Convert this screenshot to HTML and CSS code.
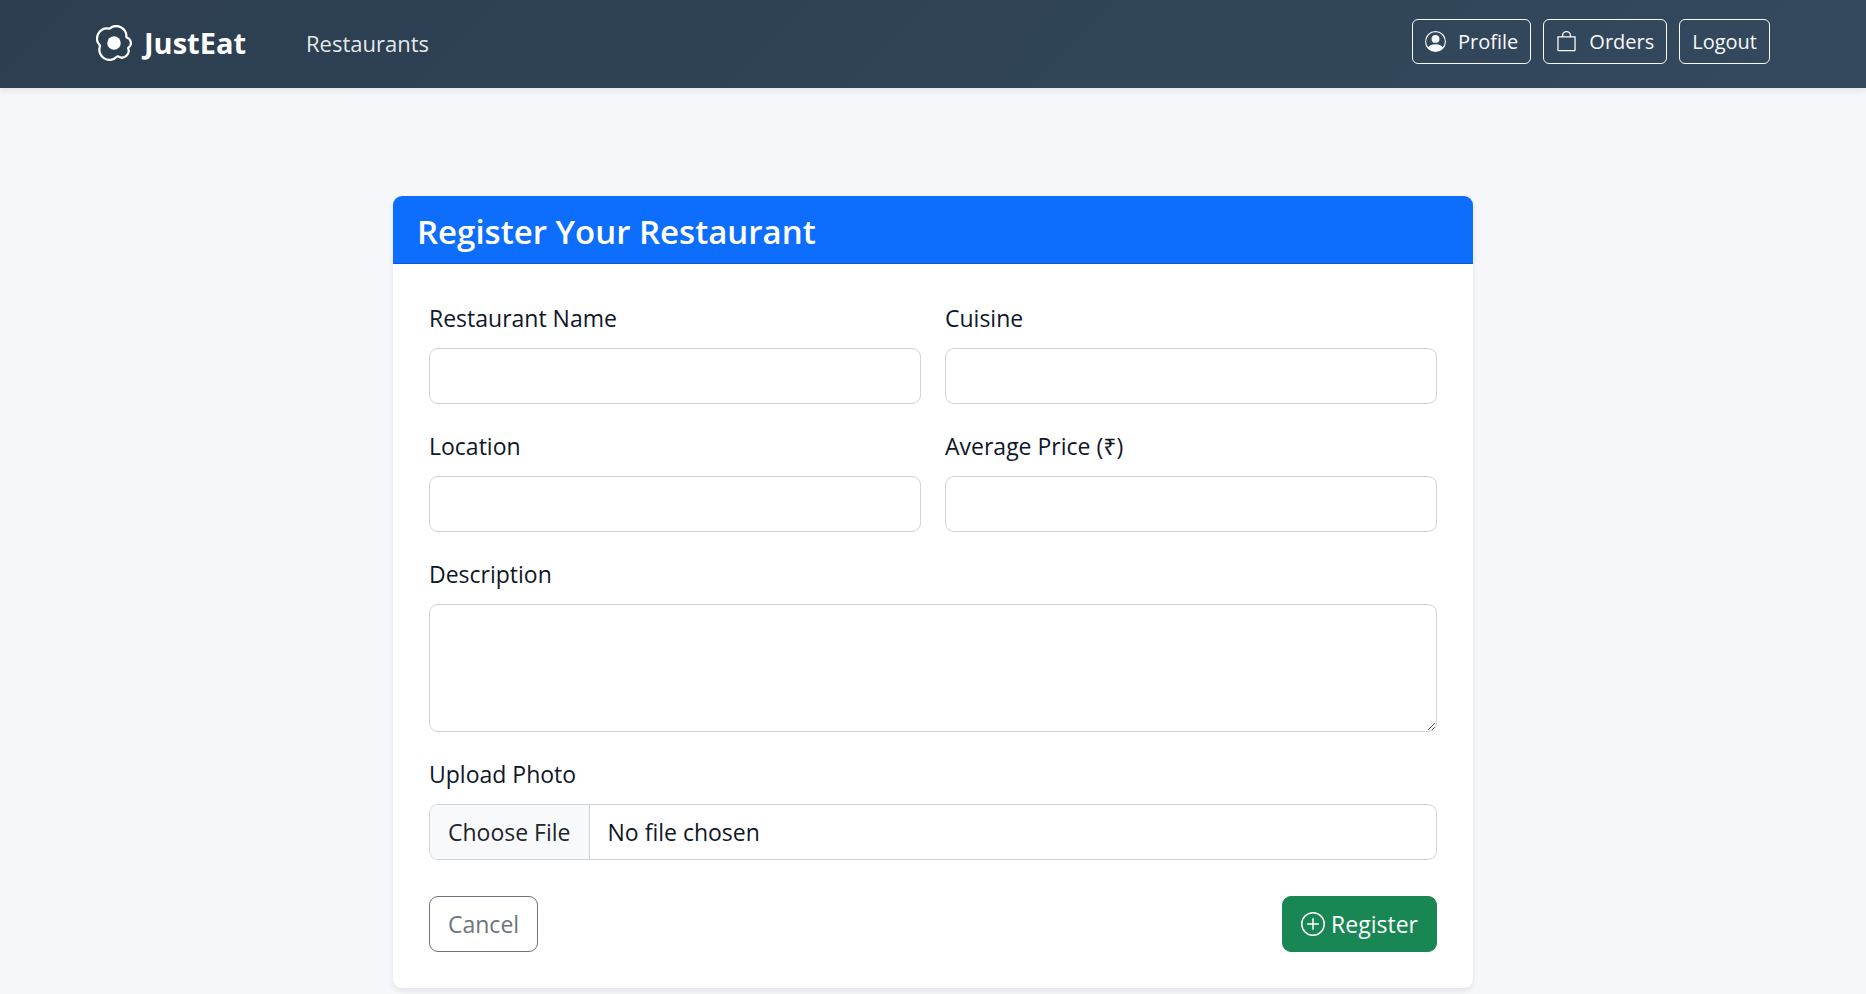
FILE: index.html
```html
<!DOCTYPE html>
<html lang="en">
<head>
<meta charset="utf-8">
<meta name="viewport" content="width=device-width, initial-scale=1">
<title>JustEat - Register Your Restaurant</title>
<link rel="stylesheet" href="styles.css">
</head>
<body>
<header class="navbar">
  <div class="navbar-inner">
    <a class="brand" href="#">
      <svg class="brand-icon" viewBox="0 0 16 16" fill="currentColor" aria-hidden="true"><path d="M8 11a3 3 0 1 0 0-6 3 3 0 0 0 0 6z"/><path d="M13.997 5.17a5 5 0 0 0-8.101-4.09A5 5 0 0 0 1.28 9.342a5 5 0 0 0 8.336 5.109 3.5 3.5 0 0 0 5.201-4.065 3.001 3.001 0 0 0-.822-5.216zm-1-.034a1 1 0 0 0 .668.977 2.001 2.001 0 0 1 .547 3.478 1 1 0 0 0-.341 1.113 2.5 2.5 0 0 1-3.715 2.905 1 1 0 0 0-1.262.152 4 4 0 0 1-6.67-4.087 1 1 0 0 0-.2-1 4 4 0 0 1 3.693-6.61 1 1 0 0 0 .8-.2 4 4 0 0 1 6.48 3.273z"/></svg>
      <span>JustEat</span>
    </a>
    <nav class="nav-links"><a class="nav-link" href="#">Restaurants</a></nav>
    <div class="nav-actions">
      <a class="btn-nav" href="#"><svg class="nav-icon" viewBox="0 0 16 16" fill="currentColor" aria-hidden="true"><path d="M11 6a3 3 0 1 1-6 0 3 3 0 0 1 6 0z"/><path fill-rule="evenodd" d="M0 8a8 8 0 1 1 16 0A8 8 0 0 1 0 8zm8-7a7 7 0 0 0-5.468 11.37C3.242 11.226 4.805 10 8 10s4.757 1.225 5.468 2.37A7 7 0 0 0 8 1z"/></svg><span>Profile</span></a>
      <a class="btn-nav" href="#"><svg class="nav-icon" viewBox="0 0 16 16" fill="currentColor" aria-hidden="true"><path d="M8 1a2.5 2.5 0 0 1 2.5 2.5V4h-5v-.5A2.5 2.5 0 0 1 8 1zm3.5 3v-.5a3.5 3.5 0 1 0-7 0V4H1v10.500a1 1 0 0 0 1 1h12a1 1 0 0 0 1-1V4h-3.5zM2 5h12v9.500H2V5z"/></svg><span>Orders</span></a>
      <button class="btn-nav" type="button">Logout</button>
    </div>
  </div>
</header>
<main class="page">
  <section class="card">
    <h1 class="card-header">Register Your Restaurant</h1>
    <form class="card-body">
      <div class="field">
        <label for="name">Restaurant Name</label>
        <input class="control" id="name" type="text">
      </div>
      <div class="field">
        <label for="cuisine">Cuisine</label>
        <input class="control" id="cuisine" type="text">
      </div>
      <div class="field">
        <label for="location">Location</label>
        <input class="control" id="location" type="text">
      </div>
      <div class="field">
        <label for="price">Average Price (₹)</label>
        <input class="control" id="price" type="text" inputmode="numeric">
      </div>
      <div class="field field-wide">
        <label for="description">Description</label>
        <textarea class="control control-area" id="description" rows="3"></textarea>
      </div>
      <div class="field field-wide">
        <label for="photo">Upload Photo</label>
        <input class="control control-file" id="photo" type="file">
      </div>
      <div class="actions">
        <button class="btn btn-cancel" type="button">Cancel</button>
        <button class="btn btn-register" type="submit"><svg class="btn-icon" viewBox="0 0 16 16" fill="currentColor" aria-hidden="true"><path d="M8 15A7 7 0 1 1 8 1a7 7 0 0 1 0 14zm0 1A8 8 0 1 0 8 0a8 8 0 0 0 0 16z"/><path d="M8 4a.5.5 0 0 1 .5.5v3h3a.5.5 0 0 1 0 1h-3v3a.5.5 0 0 1-1 0v-3h-3a.5.5 0 0 1 0-1h3v-3A.5.5 0 0 1 8 4z"/></svg><span>Register</span></button>
      </div>
    </form>
  </section>
</main>
</body>
</html>
```

FILE: styles.css
```css
* {
  box-sizing: border-box;
}

body {
  margin: 0;
  background: #f5f7fb;
  color: #0f172a;
  font-family: "Open Sans", "Noto Sans", sans-serif;
  font-size: 23px;
  line-height: 36px;
}

a {
  color: inherit;
  text-decoration: none;
}

button,
input,
textarea {
  font: inherit;
}

svg {
  display: block;
  flex: none;
}

.navbar {
  background: linear-gradient(135deg, #2c3e50, #34495e);
  box-shadow: 0 3px 6px rgba(0, 0, 0, 0.075);
  color: #fff;
}

.navbar-inner {
  display: flex;
  align-items: center;
  max-width: 1710px;
  min-height: 88px;
  margin: 0 auto;
  padding: 0 18px 2px;
}

.brand {
  display: flex;
  align-items: center;
  gap: 12px;
  font-size: 29px;
  font-weight: 700;
}

.brand-icon {
  width: 36px;
  height: 36px;
}

.nav-links {
  margin-left: 60px;
}

.nav-link {
  color: rgba(255, 255, 255, 0.9);
  font-size: 22px;
}

.nav-actions {
  display: flex;
  gap: 12px;
  margin-left: auto;
  margin-bottom: 4px;
}

.btn-nav {
  display: flex;
  align-items: center;
  gap: 12px;
  padding: 6px 12px;
  border: 1px solid #f8f9fa;
  border-radius: 6px;
  background: transparent;
  color: #f8f9fa;
  font-size: 20px;
  line-height: 31px;
}

.nav-icon {
  width: 21px;
  height: 21px;
}

.page {
  padding: 108px 18px 6px;
}

.card {
  max-width: 1080px;
  margin: 0 auto;
  border-radius: 9px;
  overflow: hidden;
  background: #fff;
  box-shadow: 0 3px 6px rgba(0, 0, 0, 0.075);
}

.card-header {
  margin: 0;
  padding: 14px 24px 10px;
  border-bottom: 1px solid rgba(0, 0, 0, 0.18);
  background: #0d6efd;
  color: #fff;
  font-size: 33px;
  font-weight: 600;
  line-height: 43px;
}

.card-body {
  display: grid;
  grid-template-columns: 1fr 1fr;
  gap: 24px;
  padding: 36px;
}

.field {
  display: flex;
  flex-direction: column;
  gap: 12px;
}

.field-wide,
.actions {
  grid-column: 1 / -1;
}

.control {
  display: block;
  width: 100%;
  min-width: 0;
  height: 56px;
  margin: 0;
  padding: 9px 18px;
  border: 1px solid #ced4da;
  border-radius: 9px;
  background: #fff;
  color: inherit;
}

.control-area {
  height: 128px;
  resize: vertical;
}

.control-file {
  padding: 0;
  overflow: hidden;
  line-height: 54px;
}

.control-file::file-selector-button {
  height: 54px;
  margin: 0 18px 0 0;
  padding: 0 18px;
  border: 0;
  border-right: 1px solid #ced4da;
  background: #f8f9fa;
  color: #212529;
  font: inherit;
}

.actions {
  display: flex;
  justify-content: space-between;
  margin-top: 12px;
}

.btn {
  display: flex;
  align-items: center;
  gap: 6px;
  padding: 9px 18px;
  border: 1px solid;
  border-radius: 9px;
}

.btn-cancel {
  border-color: #6c757d;
  background: #fff;
  color: #6c757d;
}

.btn-register {
  border-color: #198754;
  background: #198754;
  color: #fff;
}

.btn-icon {
  width: 24px;
  height: 24px;
}
```
